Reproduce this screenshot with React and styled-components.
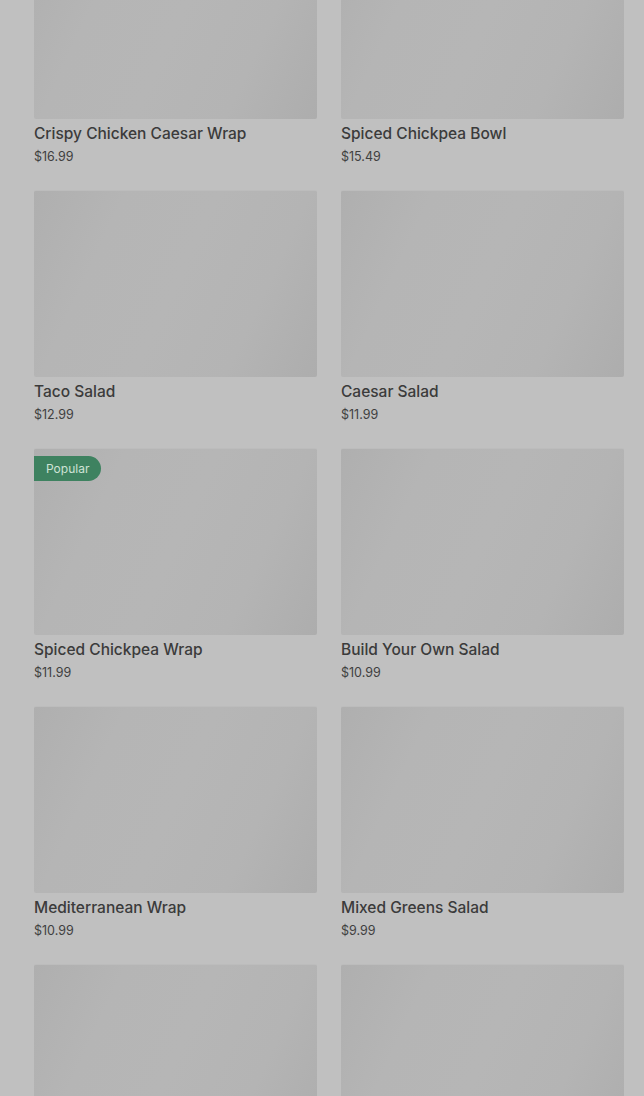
import React from 'react';
import styled, { createGlobalStyle } from 'styled-components';

const GlobalStyle = createGlobalStyle`
  html, body {
    margin: 0;
    padding: 0;
    background: #c0c0c0;
    overflow: hidden;
  }
  body {
    font-family: Inter, "Liberation Sans", sans-serif;
  }
`;

const Page = styled.div`
  height: 1096px;
  overflow: hidden;
  background: #c0c0c0;
`;

const Grid = styled.div`
  display: grid;
  grid-template-columns: 283px 283px;
  column-gap: 24px;
  row-gap: 25px;
  padding: 0 20px 0 34px;
  margin-top: -68px;
`;

const Card = styled.div`
  display: flex;
  flex-direction: column;
`;

const ImageBox = styled.div`
  position: relative;
  height: 187px;
  flex-shrink: 0;
  border-radius: 2px;
  border-top: 1px solid #bcbcbc;
  box-sizing: border-box;
  background: linear-gradient(
    115deg,
    #afafaf 0%,
    #b5b5b5 25%,
    #b6b6b6 50%,
    #b4b4b4 75%,
    #adadad 100%
  );
`;

const Badge = styled.span`
  position: absolute;
  top: 7px;
  left: 0;
  height: 25px;
  padding: 0 12px;
  display: flex;
  align-items: center;
  background: #3e8260;
  color: #cfe2d6;
  font-size: 12px;
  border-radius: 0 13px 13px 0;
`;

const Title = styled.div`
  margin-top: 5px;
  font-size: 15.5px;
  line-height: 20px;
  height: 20px;
  font-weight: 500;
  color: #3b3b3b;
`;

const Price = styled.div`
  margin-top: 5px;
  font-size: 12.5px;
  line-height: 16px;
  height: 16px;
  color: #3f3f3f;
`;

const items = [
  { name: 'Crispy Chicken Caesar Wrap', price: '$16.99' },
  { name: 'Spiced Chickpea Bowl', price: '$15.49' },
  { name: 'Taco Salad', price: '$12.99' },
  { name: 'Caesar Salad', price: '$11.99' },
  { name: 'Spiced Chickpea Wrap', price: '$11.99', badge: 'Popular' },
  { name: 'Build Your Own Salad', price: '$10.99' },
  { name: 'Mediterranean Wrap', price: '$10.99' },
  { name: 'Mixed Greens Salad', price: '$9.99' },
  { name: 'Greek Salad', price: '$9.49' },
  { name: 'Garden Wrap', price: '$8.99' },
];

const App = () => {
  return (
    <Page>
      <GlobalStyle />
      <Grid>
        {items.map((item) => (
          <Card key={item.name}>
            <ImageBox>{item.badge && <Badge>{item.badge}</Badge>}</ImageBox>
            <Title>{item.name}</Title>
            <Price>{item.price}</Price>
          </Card>
        ))}
      </Grid>
    </Page>
  );
};

export default App;
